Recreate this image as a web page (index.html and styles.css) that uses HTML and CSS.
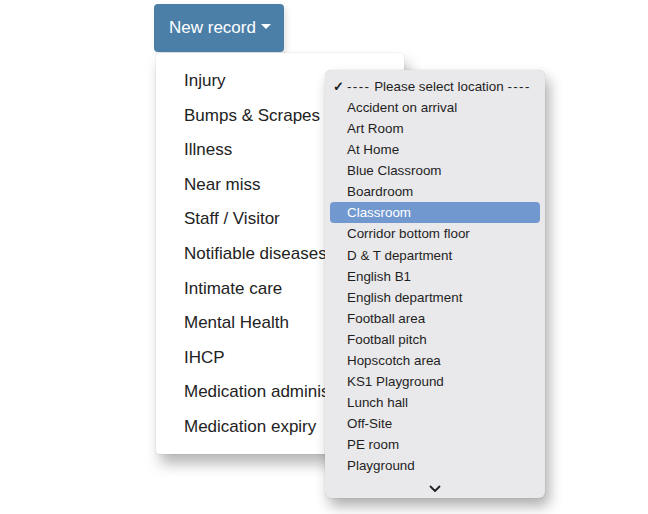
FILE: index.html
```html
<!DOCTYPE html>
<html lang="en">
<head>
    <meta charset="UTF-8">
    <meta name="viewport" content="width=device-width, initial-scale=1.0">
    <title>New record</title>
    <link rel="stylesheet" href="styles.css">
</head>
<body>
    <div class="page">
        <button class="btn-record">New record <span class="caret"></span></button>

        <!-- Record type menu -->
        <ul class="record-menu">
            <li>Injury</li>
            <li>Bumps &amp; Scrapes</li>
            <li>Illness</li>
            <li>Near miss</li>
            <li>Staff / Visitor</li>
            <li>Notifiable diseases</li>
            <li>Intimate care</li>
            <li>Mental Health</li>
            <li>IHCP</li>
            <li>Medication administration</li>
            <li>Medication expiry</li>
        </ul>

        <!-- Native location select popup -->
        <div class="location-popup">
            <div class="opt checked"><span class="tick">&#10003;</span><span class="dash">----</span> Please select location <span class="dash">----</span></div>
            <div class="opt">Accident on arrival</div>
            <div class="opt">Art Room</div>
            <div class="opt">At Home</div>
            <div class="opt">Blue Classroom</div>
            <div class="opt">Boardroom</div>
            <div class="opt selected">Classroom</div>
            <div class="opt">Corridor bottom floor</div>
            <div class="opt">D &amp; T department</div>
            <div class="opt">English B1</div>
            <div class="opt">English department</div>
            <div class="opt">Football area</div>
            <div class="opt">Football pitch</div>
            <div class="opt">Hopscotch area</div>
            <div class="opt">KS1 Playground</div>
            <div class="opt">Lunch hall</div>
            <div class="opt">Off-Site</div>
            <div class="opt">PE room</div>
            <div class="opt">Playground</div>
            <div class="more">
                <svg width="12" height="8" viewBox="0 0 12 8"><path d="M1.5 1.5 L6 6 L10.5 1.5" fill="none" stroke="#222" stroke-width="1.8" stroke-linecap="round" stroke-linejoin="round"/></svg>
            </div>
        </div>
    </div>
</body>
</html>
```

FILE: styles.css
```css
body {
    margin: 0;
    background: #fff;
    font-family: "Liberation Sans", Arial, sans-serif;
    color: #222;
}
.page {
    position: relative;
    width: 648px;
    height: 514px;
    padding: 4px 0 0 154px;
    box-sizing: border-box;
}
.btn-record {
    display: flex;
    align-items: center;
    gap: 5px;
    width: 130px;
    height: 48px;
    padding: 0 0 0 15px;
    border: none;
    border-radius: 4px;
    background-color: #4b7fa8;
    color: #fff;
    font-family: "Liberation Sans", Arial, sans-serif;
    font-size: 17px;
    box-shadow: 2px 3px 6px rgba(0, 0, 0, 0.12);
}
.caret {
    width: 0;
    height: 0;
    margin-top: -4px;
    border-left: 5px solid transparent;
    border-right: 5px solid transparent;
    border-top: 5px solid #fff;
}
.record-menu {
    list-style: none;
    margin: 1px 0 0 2px;
    padding: 11px 0 9px;
    width: 248px;
    background: #fff;
    border-radius: 4px;
    box-shadow: 4px 10px 14px rgba(0, 0, 0, 0.28), 0 0 2px rgba(0, 0, 0, 0.12);
}
.record-menu li {
    width: 141px;
    height: 34.6px;
    line-height: 34.6px;
    padding-left: 28px;
    font-size: 17px;
    white-space: nowrap;
    overflow: hidden;
}
.location-popup {
    position: absolute;
    left: 325px;
    top: 70px;
    width: 220px;
    height: 428px;
    box-sizing: border-box;
    padding-top: 6px;
    background: #e9e8ea;
    border-radius: 6px;
    box-shadow: 4px 8px 14px rgba(0, 0, 0, 0.32), 0 0 1px rgba(0, 0, 0, 0.25);
    font-size: 13.4px;
    color: #1f1f1f;
}
.opt {
    position: relative;
    height: 21px;
    line-height: 21px;
    margin: 0 5px 0.07px;
    padding-left: 17px;
    border-radius: 4px;
    white-space: nowrap;
}
.opt .tick {
    position: absolute;
    left: 3px;
    font-size: 13px;
    font-weight: bold;
}
.opt .dash {
    letter-spacing: 1.4px;
}
.opt.selected {
    background: #7198cf;
    color: #fff;
}
.more {
    display: flex;
    justify-content: center;
    padding-top: 9px;
}
```
